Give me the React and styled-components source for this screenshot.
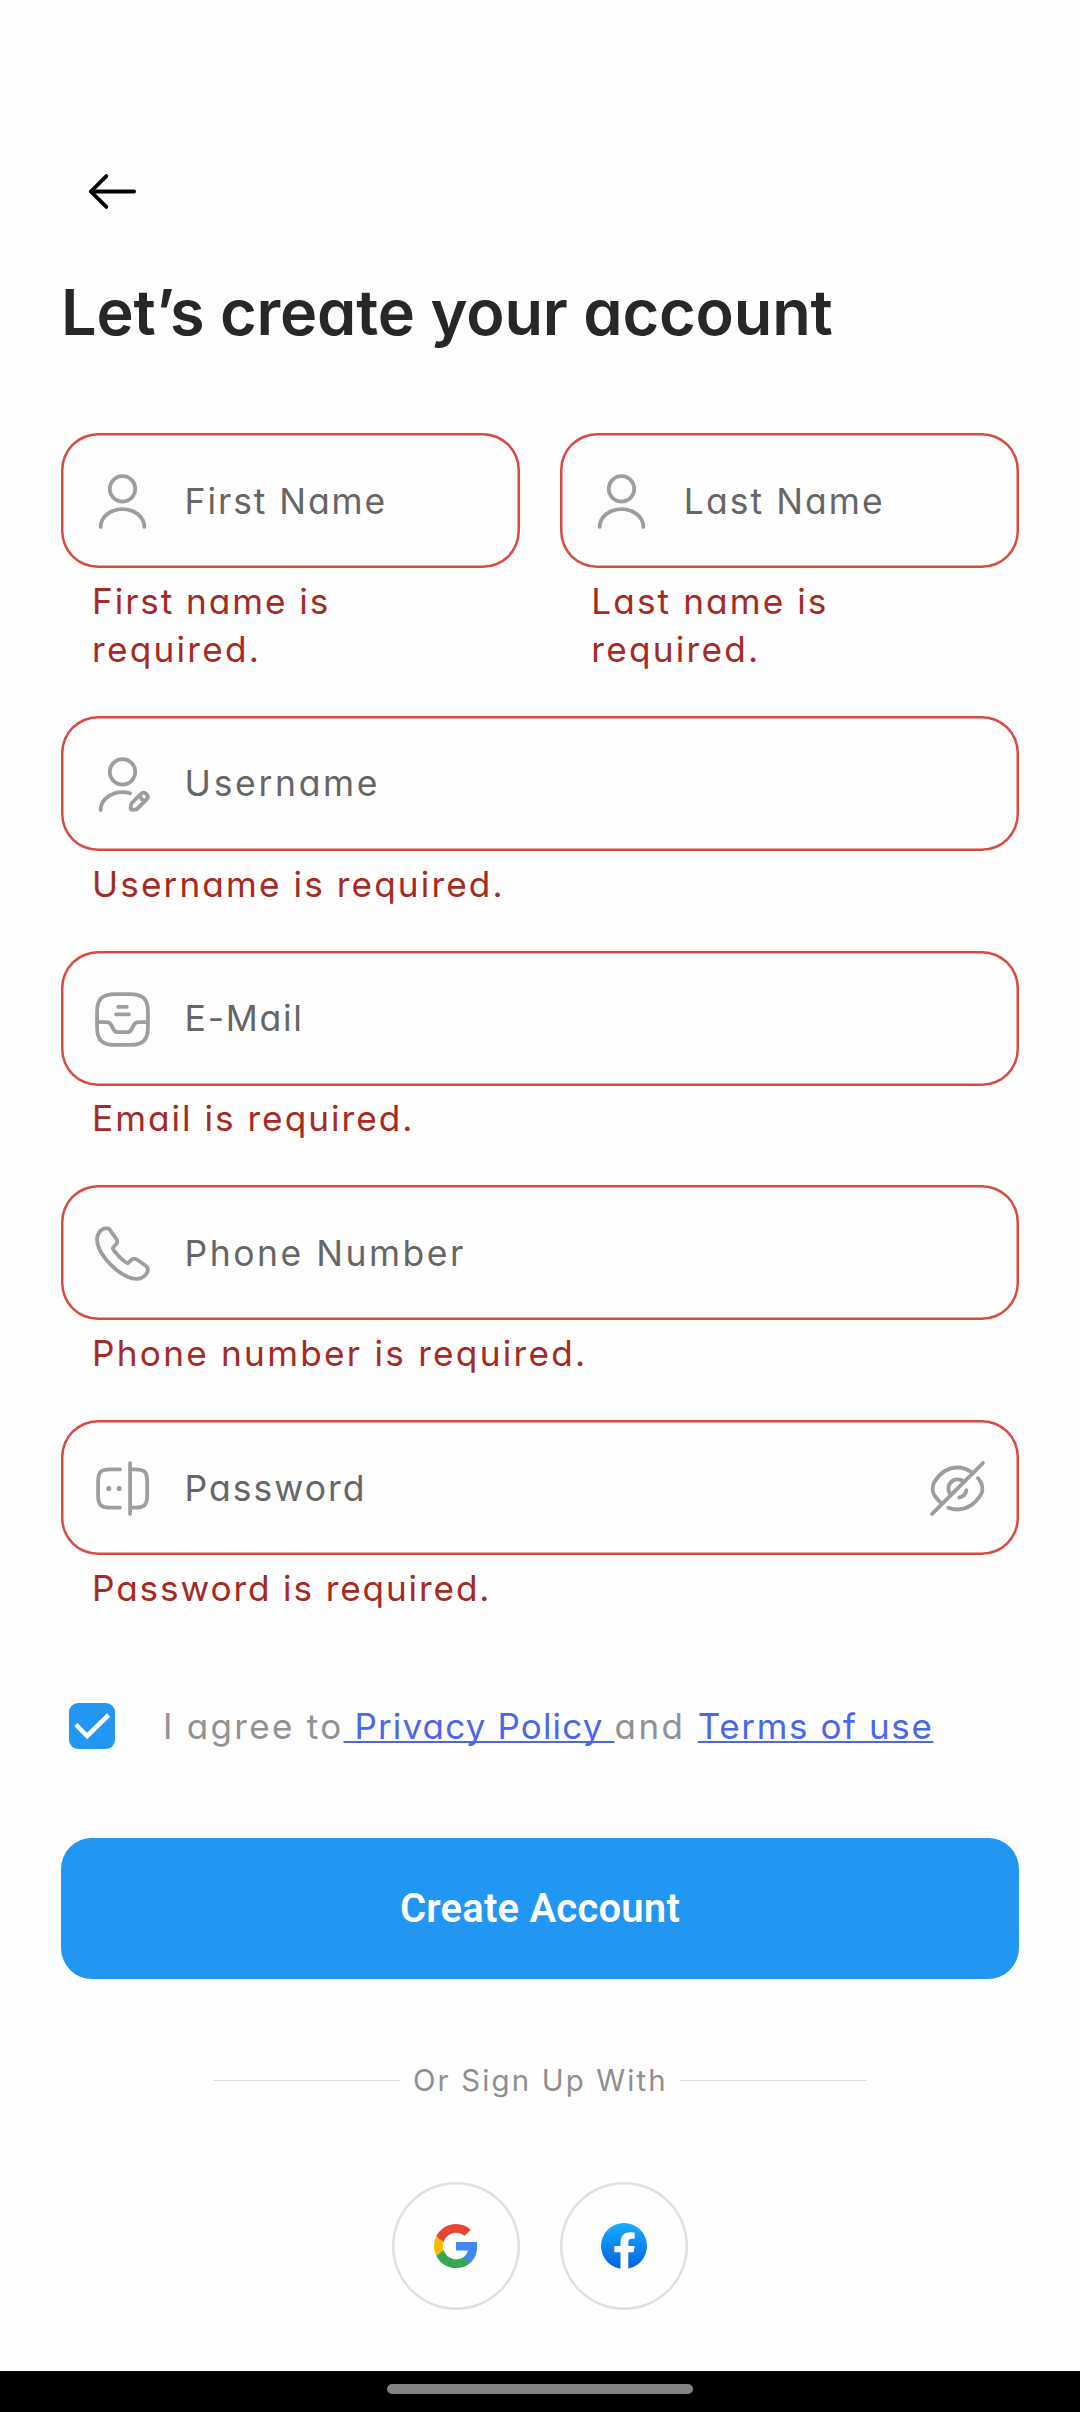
import React from "react";
import styled, { createGlobalStyle } from "styled-components";

const GlobalStyle = createGlobalStyle`
  * { box-sizing: border-box; }
  body {
    margin: 0;
    background: #fefefe;
    font-family: Inter, "Open Sans", sans-serif;
    font-feature-settings: "cv11";
  }
`;

const Screen = styled.div`
  width: 1080px;
  height: 2412px;
  display: flex;
  flex-direction: column;
  background: #fefefe;
`;

const Content = styled.main`
  flex: 1;
  display: flex;
  flex-direction: column;
  padding: 161px 61px 0;
`;

const BackButton = styled.button`
  align-self: flex-start;
  display: flex;
  margin: 0 0 50.5px 20.8px;
  padding: 0;
  border: 0;
  background: none;
  color: #000;
`;

const Title = styled.h1`
  margin: 0 0 82.8px;
  font-size: 63px;
  line-height: 78px;
  font-weight: 600;
  letter-spacing: ${(p) => p.$spacing}px;
  color: #272727;
  white-space: nowrap;
`;

const NameRow = styled.div`
  display: grid;
  grid-template-columns: 1fr 1fr;
  gap: 40.5px;
`;

const FieldGroup = styled.div`
  display: flex;
  flex-direction: column;
  margin-bottom: 42.9px;
`;

const FieldBox = styled.div`
  display: flex;
  align-items: center;
  height: 135px;
  padding: 0 31px 0 30.8px;
  border-radius: 37px;
  box-shadow: inset 0 0 0 2.5px #db4a40;
  color: #9e9e9e;
`;

const FieldIcon = styled.span`
  display: flex;
  padding-top: 2px;
`;

const Placeholder = styled.span`
  flex: 1;
  margin-left: 31.8px;
  padding-top: 2px;
  font-size: 35.5px;
  line-height: 48px;
  letter-spacing: ${(p) => p.$spacing}px;
  color: #666;
  white-space: nowrap;
`;

const ErrorText = styled.span`
  display: block;
  padding-left: 31px;
  font-size: 35.2px;
  line-height: 48px;
  letter-spacing: ${(p) => p.$spacing}px;
  color: #a52a23;
  white-space: nowrap;

  ${FieldBox} + & {
    padding-top: 8.8px;
  }
`;

const AgreeRow = styled.label`
  display: flex;
  align-items: center;
  height: 46px;
  margin: 48.5px 0 0 8px;
`;

const Checkbox = styled.span`
  display: flex;
  width: 46px;
  height: 46px;
  margin-right: 48px;
  border-radius: 9px;
  background: #2196f3;
`;

const AgreeText = styled.span`
  font-size: 35px;
  line-height: 48px;
  color: #929292;
  white-space: pre;
`;

const Part = styled.span`
  letter-spacing: ${(p) => p.$spacing}px;
`;

const Link = styled(Part)`
  color: #4a67ea;
  text-decoration: underline;
  text-decoration-thickness: 2px;
  text-decoration-skip-ink: none;
  text-underline-offset: 2px;
`;

const SubmitButton = styled.button`
  height: 141px;
  margin: 89px 0 0;
  border: 0;
  border-radius: 31px;
  background: #2196f3;
  color: #fff;
  font: 600 40px Roboto, sans-serif;
  letter-spacing: 0.2px;
`;

const Divider = styled.div`
  display: flex;
  align-items: center;
  justify-content: center;
  height: 40px;
  margin-top: 81px;
  font-size: 29.4px;
  letter-spacing: ${(p) => p.$spacing}px;
  color: #8f8f8f;
  white-space: nowrap;
`;

const Rule = styled.span`
  width: 186px;
  height: 1px;
  background: #d9d9d9;
`;

const DividerText = styled.span`
  width: 280px;
  padding-left: 13px;
`;

const Socials = styled.div`
  display: flex;
  justify-content: center;
  gap: 40.5px;
  margin-top: 82px;
`;

const SocialButton = styled.button`
  display: flex;
  align-items: center;
  justify-content: center;
  width: 127.5px;
  height: 127.5px;
  padding: 0;
  border: 0;
  border-radius: 50%;
  background: none;
  box-shadow: inset 0 0 0 2.5px #e0e0e0;
`;

const NavBar = styled.footer`
  display: flex;
  justify-content: center;
  height: 41px;
  padding-top: 13px;
  background: #000;
`;

const NavHandle = styled.span`
  width: 306px;
  height: 10px;
  border-radius: 5px;
  background: #838383;
`;

const PATHS = {
  back: ["M9.57 5.93 3.5 12l6.07 6.07", "M20.5 12H3.67"],
  user: [
    "M12 12a5 5 0 1 0 0-10 5 5 0 0 0 0 10Z",
    "M20.59 22c0-3.87-3.85-7-8.59-7s-8.59 3.13-8.59 7",
  ],
  userEdit: [
    "M12 12a5 5 0 1 0 0-10 5 5 0 0 0 0 10Z",
    "m19.21 15.74-3.54 3.54c-.14.14-.27.4-.3.59l-.19 1.35c-.07.49.27.83.76.76l1.35-.19c.19-.03.46-.16.59-.3l3.54-3.54c.61-.61.9-1.32 0-2.22-.89-.89-1.6-.6-2.21.01Z",
    "M18.7 16.25c.3 1.08 1.14 1.92 2.22 2.22",
    "M3.41 22c0-3.87 3.85-7 8.59-7 1.04 0 2.04.15 2.97.43",
  ],
  inbox: [
    "M9 22h6c5 0 7-2 7-7V9c0-5-2-7-7-7H9C4 2 2 4 2 9v6c0 5 2 7 7 7Z",
    "M2 13h3.76c.76 0 1.45.43 1.79 1.11l.89 1.79c.56 1.1 1.56 1.1 1.8 1.1h3.53c.76 0 1.45-.43 1.79-1.11l.89-1.79A1.996 1.996 0 0 1 18.24 13h3.74",
    "M10.34 7h3.33",
    "M9.5 10h5",
  ],
  phone: [
    "M21.97 18.33c0 .36-.08.73-.25 1.09-.17.36-.39.7-.68 1.02-.49.54-1.03.93-1.64 1.18-.6.25-1.25.38-1.95.38-1.02 0-2.11-.24-3.26-.73s-2.3-1.15-3.44-1.98a28.75 28.75 0 0 1-3.28-2.8 28.414 28.414 0 0 1-2.79-3.27c-.82-1.14-1.48-2.28-1.96-3.41C2.24 8.67 2 7.58 2 6.54c0-.68.12-1.33.36-1.93.24-.61.62-1.17 1.15-1.67C4.15 2.31 4.85 2 5.59 2c.28 0 .56.06.81.18.26.12.49.3.67.56l2.32 3.27c.18.25.31.48.4.7.09.21.14.42.14.61 0 .24-.07.48-.21.71-.13.23-.32.47-.56.71l-.76.79c-.11.11-.16.24-.16.4 0 .08.01.15.03.23.03.08.06.14.08.2.18.33.49.76.93 1.28.45.52.93 1.05 1.45 1.58.54.53 1.06 1.02 1.59 1.47.52.44.95.74 1.29.92.05.02.11.05.18.08.08.03.16.04.25.04.17 0 .3-.06.41-.17l.76-.75c.25-.25.49-.44.72-.56.23-.14.46-.21.71-.21.19 0 .39.04.61.13.22.09.45.22.7.39l3.31 2.35c.26.18.44.39.55.64.1.25.16.5.16.78Z",
  ],
  password: [
    "M11 19.5H7.3c-3.9 0-4.9-1-4.9-4.9V9.4c0-3.9 1-4.9 4.9-4.9H11",
    "M15.04 4.5h1.77c3.9 0 4.9 1 4.9 4.9v5.2c0 3.9-1 4.9-4.9 4.9h-1.77",
    "M15 2v20",
  ],
  eyeOff: [
    "m14.53 9.47-5.06 5.06a3.576 3.576 0 1 1 5.06-5.06Z",
    "M17.82 5.77C16.07 4.45 14.07 3.73 12 3.73c-3.53 0-6.82 2.08-9.11 5.68-.9 1.41-.9 3.78 0 5.19.79 1.24 1.71 2.31 2.71 3.17",
    "M8.42 19.53c1.14.48 2.35.74 3.58.74 3.53 0 6.82-2.08 9.11-5.68.9-1.41.9-3.78 0-5.19-.33-.52-.69-1.01-1.06-1.47",
    "M15.51 12.7a3.565 3.565 0 0 1-2.82 2.82",
    "M9.47 14.53 2 22",
    "m22 2-7.47 7.47",
  ],
};

function Icon({ name }) {
  return (
    <svg
      width="61"
      height="61"
      viewBox="0 0 24 24"
      fill="none"
      stroke="currentColor"
      strokeWidth="1.5"
      strokeLinecap="round"
      strokeLinejoin="round"
    >
      {PATHS[name].map((d) => (
        <path key={d} d={d} />
      ))}
      {name === "password" && (
        <g fill="currentColor" stroke="none">
          <circle cx="6.6" cy="12" r="1" />
          <circle cx="10.7" cy="12" r="1" />
        </g>
      )}
    </svg>
  );
}

function Field({ icon, label, spacing, errors, trailing }) {
  return (
    <FieldGroup>
      <FieldBox>
        <FieldIcon>
          <Icon name={icon} />
        </FieldIcon>
        <Placeholder $spacing={spacing}>{label}</Placeholder>
        {trailing && (
          <FieldIcon>
            <Icon name={trailing} />
          </FieldIcon>
        )}
      </FieldBox>
      {errors.map(([text, s]) => (
        <ErrorText key={text} $spacing={s}>
          {text}
        </ErrorText>
      ))}
    </FieldGroup>
  );
}

function GoogleLogo() {
  return (
    <svg width="48" height="48" viewBox="0 0 24 24">
      <path fill="#4285F4" d="M22.56 12.25c0-.78-.07-1.53-.2-2.25H12v4.26h5.92c-.26 1.37-1.04 2.53-2.21 3.31v2.77h3.57c2.08-1.92 3.28-4.74 3.28-8.09Z" />
      <path fill="#34A853" d="M12 23c2.97 0 5.46-.98 7.28-2.66l-3.57-2.77c-.98.66-2.23 1.06-3.71 1.06-2.86 0-5.29-1.93-6.16-4.53H2.18v2.84C3.99 20.53 7.7 23 12 23Z" />
      <path fill="#FBBC05" d="M5.84 14.09c-.22-.66-.35-1.36-.35-2.09s.13-1.43.35-2.09V7.07H2.18C1.43 8.55 1 10.22 1 12s.43 3.45 1.18 4.93l3.66-2.84Z" />
      <path fill="#EA4335" d="M12 5.38c1.62 0 3.06.56 4.21 1.64l3.15-3.15C17.45 2.09 14.97 1 12 1 7.7 1 3.99 3.47 2.18 7.07l3.66 2.84c.87-2.6 3.3-4.53 6.16-4.53Z" />
    </svg>
  );
}

function FacebookLogo() {
  return (
    <svg width="46" height="46" viewBox="0 0 46 46">
      <defs>
        <linearGradient id="fb" x1="0" y1="0" x2="0" y2="1">
          <stop offset="0" stopColor="#18acfe" />
          <stop offset="1" stopColor="#0163e0" />
        </linearGradient>
      </defs>
      <circle cx="23" cy="23" r="23" fill="url(#fb)" />
      <path
        fill="#fff"
        d="M19.5 46V29.3h-6.2V23h6.2v-2.7c0-7.3 3.5-11 10-11 1.3 0 3.3.2 4.2.5v6c-.5-.1-1.4-.1-2.4-.1-3.2 0-4 1.2-4 4.2V23h6.4l-1.1 6.3h-5.3V46Z"
      />
    </svg>
  );
}

export default function App() {
  return (
    <>
      <GlobalStyle />
      <Screen>
        <Content>
          <BackButton aria-label="Back">
            <Icon name="back" />
          </BackButton>
          <Title $spacing={-0.17}>Let’s create your account</Title>

          <NameRow>
            <Field icon="user" label="First Name" spacing={1.9} errors={[["First name is", 1.92], ["required.", 2.25]]} />
            <Field icon="user" label="Last Name" spacing={2.05} errors={[["Last name is", 2.1], ["required.", 2.25]]} />
          </NameRow>
          <Field icon="userEdit" label="Username" spacing={2.66} errors={[["Username is required.", 2.1]]} />
          <Field icon="inbox" label="E-Mail" spacing={1.74} errors={[["Email is required.", 2]]} />
          <Field icon="phone" label="Phone Number" spacing={2.5} errors={[["Phone number is required.", 2.25]]} />
          <Field icon="password" label="Password" spacing={2} errors={[["Password is required.", 1.86]]} trailing="eyeOff" />

          <AgreeRow>
            <Checkbox>
              <svg width="46" height="46" viewBox="0 0 46 46" fill="none" stroke="#fff" strokeWidth="4.6">
                <path d="M6.8 21.5 18.2 33 39.6 12" />
              </svg>
            </Checkbox>
            <AgreeText>
              <Part $spacing={2.3}>I agree to</Part>
              <Link $spacing={1.15}> Privacy Policy </Link>
              <Part $spacing={2.5}>and </Part>
              <Link $spacing={1.6}>Terms of use</Link>
            </AgreeText>
          </AgreeRow>

          <SubmitButton>Create Account</SubmitButton>

          <Divider $spacing={2.15}>
            <Rule />
            <DividerText>Or Sign Up With</DividerText>
            <Rule />
          </Divider>

          <Socials>
            <SocialButton aria-label="Google">
              <GoogleLogo />
            </SocialButton>
            <SocialButton aria-label="Facebook">
              <FacebookLogo />
            </SocialButton>
          </Socials>
        </Content>
        <NavBar>
          <NavHandle />
        </NavBar>
      </Screen>
    </>
  );
}
